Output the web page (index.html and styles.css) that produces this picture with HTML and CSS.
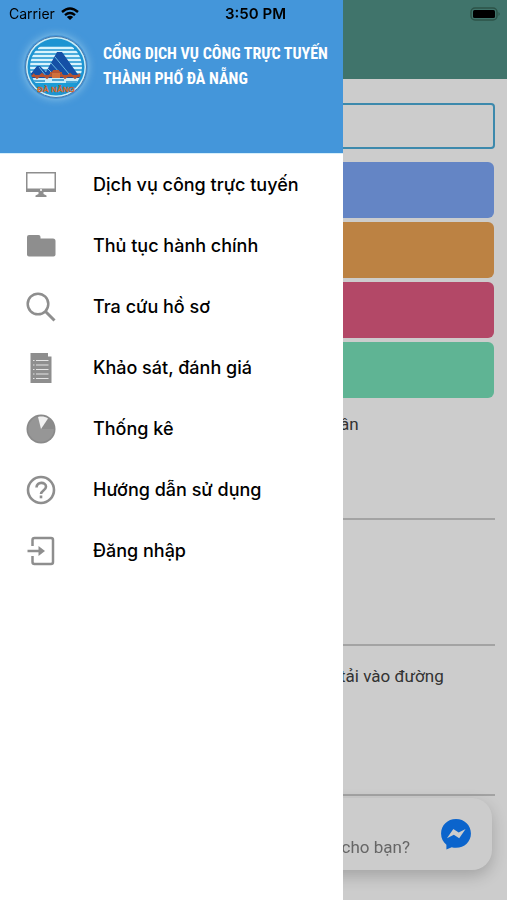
FILE: index.html
```html
<!DOCTYPE html>
<html lang="vi">
<head>
    <meta charset="UTF-8">
    <meta name="viewport" content="width=device-width, initial-scale=1.0">
    <title>Cổng dịch vụ công trực tuyến</title>
    <link rel="stylesheet" href="styles.css">
</head>
<body>
    <!-- Home page behind the menu -->
    <main class="page">
        <header class="topbar"></header>
        <div class="content">
            <input type="text" class="search" aria-label="Tra cứu">
            <div class="tiles">
                <button type="button" class="tile blue" aria-label="Dịch vụ công"></button>
                <button type="button" class="tile orange" aria-label="Thủ tục"></button>
                <button type="button" class="tile pink" aria-label="Hồ sơ"></button>
                <button type="button" class="tile green" aria-label="Khảo sát"></button>
            </div>
            <ul class="news">
                <li>ân</li>
                <li></li>
                <li class="tall">tải vào đường</li>
            </ul>
        </div>
        <div class="chat">
            <p>cho bạn?</p>
            <svg class="messenger" viewBox="0 0 30 30" aria-hidden="true">
                <path fill="#0e7eff" d="M15 1C7 1 1 7 1 14.500c0 4.500 2 8 5 10.500L6 29.500l5-2.100c1.300.4 2.600.6 4 .6 8 0 14-6 14-13.500S23 1 15 1z"/>
                <path fill="#fff" d="M6.500 19l6-8.700 5 3.400 6.500-3.400-6 8.700-5-3.400z"/>
            </svg>
        </div>
    </main>
    <div class="backdrop"></div>

    <!-- Side menu -->
    <aside class="drawer">
        <div class="drawer-header">
            <svg class="logo" viewBox="0 0 64 64" aria-hidden="true">
                <defs>
                    <clipPath id="disc"><circle cx="32" cy="32" r="26"/></clipPath>
                </defs>
                <circle cx="32" cy="32" r="30.500" fill="#c9ecf8" stroke="#4a78a8" stroke-width="1"/>
                <circle cx="32" cy="32" r="28.500" fill="#1d94d2"/>
                <g clip-path="url(#disc)">
                    <path stroke="#d9f3fc" stroke-width="2.400" d="M14 13h36M10 17h44M7 21h50M5 25h54M4 29h56M4 33h56M4 37h56"/>
                    <path fill="#1550a6" d="M5 41l8-10h3l6 6 11-20h5l17 24v3H5z"/>
                    <path stroke="#69b9e2" stroke-width="1" fill="none" d="M15 32l7 9M31 22l14 17M27 28l9 10M24 34l6 6"/>
                    <path fill="#c8ecf8" d="M4 43h56v5H4z"/>
                    <path stroke="#238fc9" stroke-width="1.500" d="M7 46h14M28 45h12M42 47h15"/>
                    <path fill="#1b9cd6" d="M4 48h56v14H4z"/>
                    <path fill="none" stroke="#b55432" stroke-width="1.800" d="M6 41h52M9 39l4 4 5-4 5 4 6-6h6l6 6 5-4 5 4 5-4M26 38h12M29 36h6"/>
                    <path fill="#d0703c" d="M28 38h8v5h-8z"/>
                </g>
                <text x="32" y="57" class="logo-text">ĐÀ NẴNG</text>
            </svg>
            <h1>CỔNG DỊCH VỤ CÔNG TRỰC TUYẾN<br>THÀNH PHỐ ĐÀ NẴNG</h1>
        </div>
        <nav class="menu">
            <a href="#">
                <svg viewBox="0 0 30 30" aria-hidden="true">
                    <path fill="#8e8e8e" fill-rule="evenodd" d="M0 2h30v20H0zM1.500 3.500v15h27v-15z"/>
                    <circle cx="15" cy="20" r="1" fill="#fff"/>
                    <path fill="#8e8e8e" d="M12.500 22h5v2l3 1.500V27h-11v-1.500l3-1.500z"/>
                </svg>
                Dịch vụ công trực tuyến
            </a>
            <a href="#">
                <svg viewBox="0 0 30 30" aria-hidden="true">
                    <path fill="#8e8e8e" d="M1 6a2 2 0 0 1 2-2h9.500a2 2 0 0 1 2 2v1.500H27a2.500 2.500 0 0 1 2.500 2.500v13.500A2 2 0 0 1 27.500 25.500H3A2 2 0 0 1 1 23.500z"/>
                </svg>
                Thủ tục hành chính
            </a>
            <a href="#">
                <svg viewBox="0 0 30 30" fill="none" stroke="#8e8e8e" aria-hidden="true">
                    <circle cx="12" cy="12" r="10.300" stroke-width="2.500"/>
                    <path stroke-width="3" d="M19.500 19.500l9 9"/>
                </svg>
                Tra cứu hồ sơ
            </a>
            <a href="#">
                <svg viewBox="0 0 30 30" aria-hidden="true">
                    <path fill="#8e8e8e" d="M4.500 0H22v3.500h3.500V30h-21z"/>
                    <path stroke="#e4e4e4" stroke-width="1" d="M7 7.500h1.500M10 7.500h12.500M7 12h1.500M10 12h12.500M7 16.500h1.500M10 16.500h12.500M7 21h1.500M10 21h12.500M7 25.500h1.500M10 25.500h12.500"/>
                </svg>
                Khảo sát, đánh giá
            </a>
            <a href="#">
                <svg viewBox="0 0 30 30" aria-hidden="true">
                    <circle cx="15" cy="15" r="14.500" fill="#8a8a8a"/>
                    <circle cx="15" cy="15" r="12.800" fill="#969696"/>
                    <path fill="#8a8a8a" d="M15 15l7-10.500c4 2.500 6.500 6 6.500 10.500z"/>
                    <path fill="#f0f0f0" d="M15 15L12 3c3.500-1 7-.5 10 1.500z"/>
                </svg>
                Thống kê
            </a>
            <a href="#">
                <svg viewBox="0 0 30 30" fill="none" stroke="#8e8e8e" stroke-width="2.600" aria-hidden="true">
                    <circle cx="15" cy="15" r="13"/>
                    <path d="M10.500 12.500c0-6 9.500-6 9.500-.8 0 3.500-5 4-5 7.300"/>
                    <path d="M15 20.500v2.800"/>
                </svg>
                Hướng dẫn sử dụng
            </a>
            <a href="#">
                <svg viewBox="0 0 30 30" fill="none" stroke="#8e8e8e" stroke-width="2.500" aria-hidden="true">
                    <path d="M6.500 10V4a2 2 0 0 1 2-2H25a2 2 0 0 1 2 2v22a2 2 0 0 1-2 2H8.500a2 2 0 0 1-2-2v-6"/>
                    <path d="M1.500 15h12"/>
                    <path fill="#8e8e8e" stroke="none" d="M12.500 10l6.500 5-6.500 5z"/>
                </svg>
                Đăng nhập
            </a>
        </nav>
    </aside>

    <!-- Phone status bar -->
    <div class="status">
        <div class="carrier">
            <span>Carrier</span>
            <svg class="wifi" viewBox="0 0 18 13" fill="none" stroke="#000" stroke-width="2.400" aria-hidden="true">
                <path d="M1 5Q9-2 17 5M4 8.200q5-4.200 10 0"/>
                <path fill="#000" stroke="none" d="M5.800 10q3.200-2.600 6.400 0L9 13z"/>
            </svg>
        </div>
        <span class="time">3:50 PM</span>
        <svg class="battery" viewBox="0 0 32 14" aria-hidden="true">
            <rect x="1" y="1" width="26" height="12" rx="4" fill="none" stroke="#2c5348" stroke-width="1.500"/>
            <rect x="3" y="3" width="22" height="8" rx="1.500"/>
            <path fill="#2c5348" d="M28.500 5q2.500 2 0 4z"/>
        </svg>
    </div>
</body>
</html>
```
FILE: styles.css
```css
* {
    margin: 0;
    padding: 0;
    box-sizing: border-box;
}

:root {
    --drawer-width: calc(100% - 164px);
}

body {
    position: relative;
    min-height: 100vh;
    background: #fff;
    font-family: Inter, "Liberation Sans", sans-serif;
    color: #000;
    overflow-x: hidden;
}

/* Page */
.page {
    min-height: 100vh;
}

.topbar {
    height: 79px;
    background: #519286;
}

.content {
    padding: 24px 12px 0;
}

.search {
    display: block;
    width: 100%;
    height: 46px;
    padding: 0 12px;
    background: #fff;
    border: 2px solid #4cacd8;
    border-radius: 4px;
    font-size: 16px;
}

.tiles {
    display: flex;
    flex-direction: column;
    gap: 4px;
    margin-top: 13px;
    padding-right: 1px;
}

.tile {
    height: 56px;
    border: none;
    border-radius: 6px;
}

.blue {
    background: #7da7f7;
}

.orange {
    background: #eca354;
}

.pink {
    background: #e05b81;
}

.green {
    background: #77e2b9;
}

.news {
    list-style: none;
}

.news li {
    height: 126px;
    padding: 18px 0 0 calc(100% - 155px);
    border-bottom: 2px solid #ccc;
    font-family: Roboto, sans-serif;
    font-size: 17px;
    line-height: 24px;
    color: #404040;
    white-space: nowrap;
}

.news li:first-child {
    height: 122px;
    padding-top: 14px;
}

.news .tall {
    height: 150px;
}

/* Chat bubble */
.chat {
    position: fixed;
    left: 15px;
    right: 15px;
    bottom: 30px;
    height: 72px;
    padding: 0 20px;
    display: flex;
    align-items: center;
    justify-content: flex-end;
    gap: 30px;
    background: #fff;
    border-radius: 20px;
    box-shadow: 0 6px 16px rgba(0, 0, 0, 0.2);
}

.chat p {
    align-self: flex-end;
    padding-bottom: 11px;
    font-family: Roboto, sans-serif;
    font-size: 17px;
    line-height: 24px;
    color: #808080;
}

.messenger {
    width: 32px;
    height: 32px;
}

.backdrop {
    position: fixed;
    inset: 0;
    background: rgba(0, 0, 0, 0.2);
}

/* Side menu */
.drawer {
    position: fixed;
    top: 0;
    bottom: 0;
    left: 0;
    width: var(--drawer-width);
    background: #fff;
}

.drawer-header {
    display: flex;
    align-items: flex-start;
    gap: 15px;
    height: 154px;
    padding: 35px 12px 0 24px;
    background: #4496da;
    border-bottom: 1px solid #d5effb;
}

.logo {
    flex: none;
    width: 64px;
    height: 64px;
    border-radius: 50%;
    box-shadow: 0 0 8px rgba(190, 230, 240, 0.6);
}

.logo-text {
    font-family: "Liberation Sans", sans-serif;
    font-size: 8px;
    font-weight: bold;
    fill: #f07a2c;
    stroke: #a8502c;
    stroke-width: 0.3;
    text-anchor: middle;
}

.drawer-header h1 {
    padding-top: 6px;
    font-family: "Roboto Condensed", "Liberation Sans Narrow", sans-serif;
    font-size: 16px;
    font-weight: bold;
    line-height: 25px;
    color: #fff;
    white-space: nowrap;
}

.menu a {
    display: flex;
    align-items: center;
    gap: 37px;
    height: 61px;
    padding: 0 26px;
    font-size: 18px;
    font-weight: 500;
    color: #000;
    text-decoration: none;
    white-space: nowrap;
}

.menu svg {
    flex: none;
    width: 30px;
    height: 30px;
}

/* Status bar */
.status {
    position: fixed;
    top: 0;
    left: 0;
    width: 100%;
    height: 27px;
    padding: 0 5px 0 9px;
    display: grid;
    grid-template-columns: 1fr auto 1fr;
    align-items: center;
    font-size: 14px;
}

.carrier {
    display: flex;
    align-items: center;
    gap: 6px;
}

.wifi {
    width: 18px;
    height: 13px;
}

.time {
    font-size: 15px;
    font-weight: 600;
}

.battery {
    justify-self: end;
    width: 32px;
    height: 14px;
}
```
